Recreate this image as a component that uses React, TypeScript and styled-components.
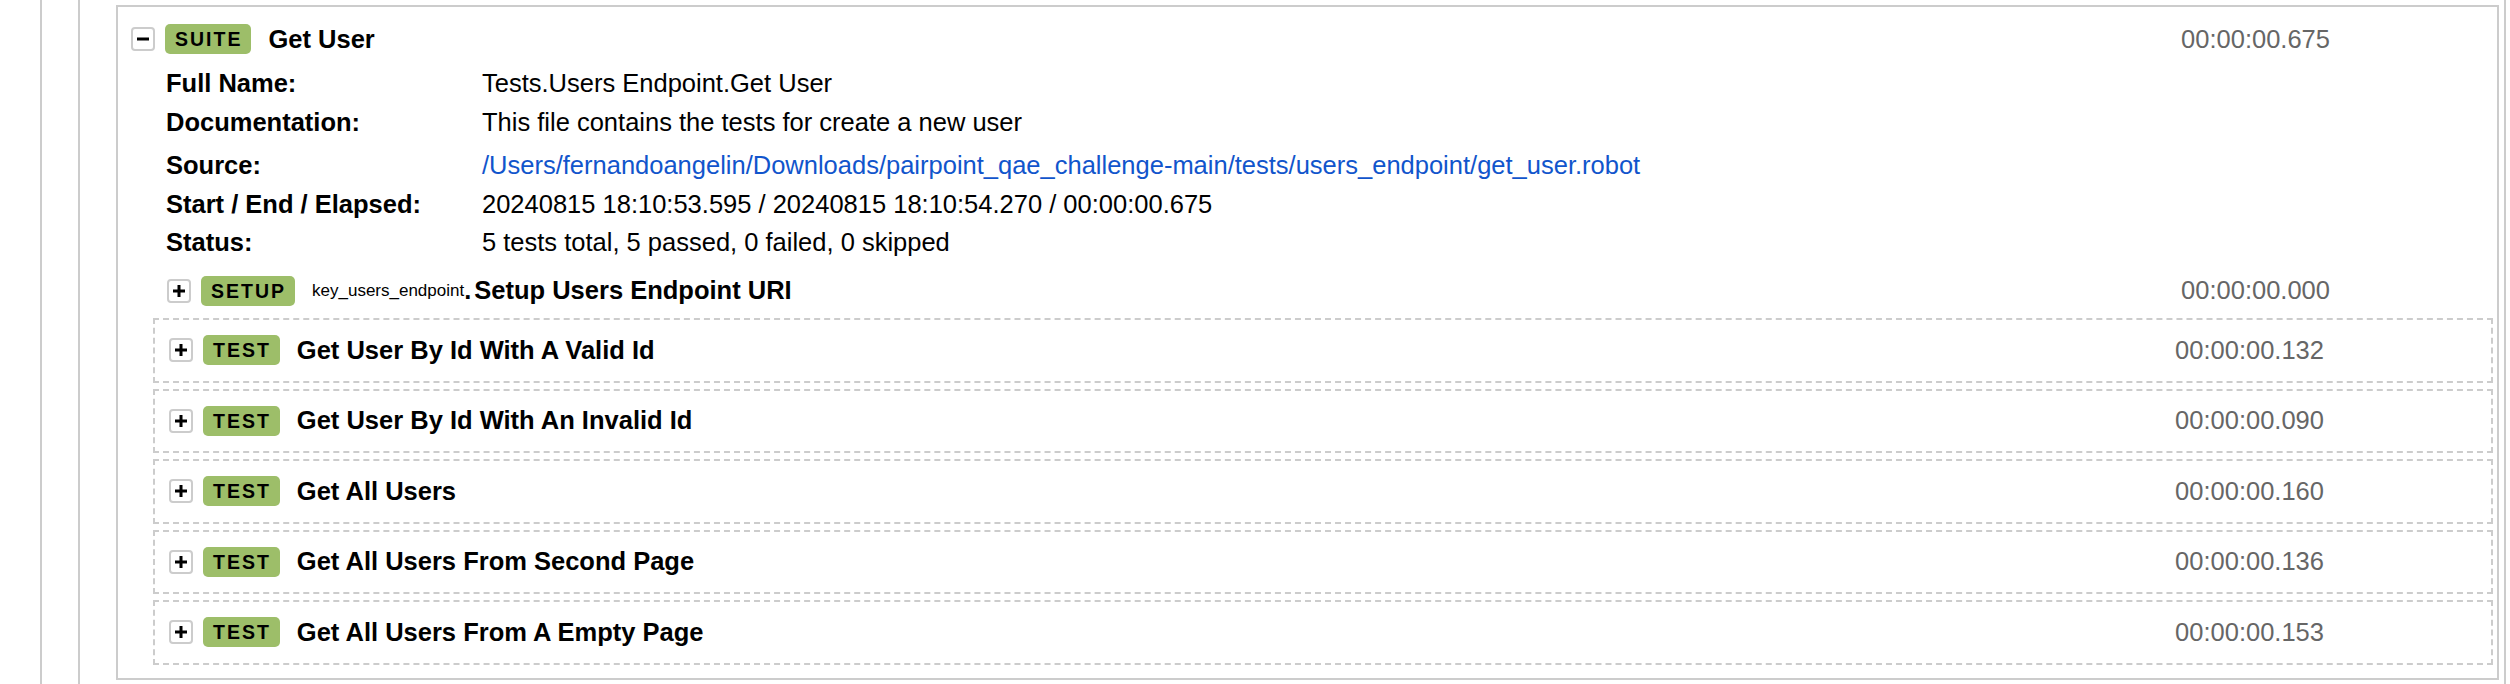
import React from "react";
import styled, { createGlobalStyle } from "styled-components";

const GlobalStyle = createGlobalStyle`
  html, body {
    margin: 0;
    padding: 0;
    background: #fff;
    overflow: hidden;
  }
  body {
    font-family: "Liberation Sans", Arial, Helvetica, sans-serif;
    font-size: 25.5px;
    color: #000;
  }
`;

const OuterFrame = styled.div`
  margin-left: 40px;
  border-left: 2px solid #ccc;
  height: 100vh;
  overflow: hidden;
`;

const ParentFrame = styled.div`
  margin: 0 4px 0 36px;
  padding: 5px 0 40px;
  border-left: 2px solid #ccc;
  border-right: 2px solid #ccc;
`;

const SuiteBox = styled.div`
  margin: 0 5px 0 36px;
  border: 2px solid #ccc;
  padding: 17px 0 13px;
`;

const Header = styled.div<{ $pad: number }>`
  display: flex;
  align-items: center;
  height: 30px;
  padding: 0 167px 0 ${(p) => p.$pad}px;
  white-space: nowrap;
`;

const Toggle = styled.span`
  box-sizing: border-box;
  flex: none;
  width: 24px;
  height: 24px;
  border: 2px solid #ccc;
  border-radius: 4px;
  display: flex;
  align-items: center;
  justify-content: center;
  margin-right: 10px;
  background: #fff;
`;

const Badge = styled.span`
  box-sizing: border-box;
  flex: none;
  height: 30px;
  padding: 4px 9px 4px 10px;
  font-size: 19.5px;
  line-height: 22px;
  font-weight: bold;
  letter-spacing: 2px;
  background: #9dbe69;
  border-radius: 5px;
  margin-right: 17px;
`;

const Name = styled.span`
  font-weight: bold;
`;

const ParentName = styled.span`
  font-size: 17px;
  font-weight: normal;
`;

const Dot = styled.span`
  font-weight: bold;
  margin-right: 3px;
`;

const Elapsed = styled.span`
  margin-left: auto;
  color: #666;
`;

const Meta = styled.div`
  display: grid;
  grid-template-columns: 316px 1fr;
  margin: 10px 0 0 48px;
  line-height: 38.5px;
`;

const MetaLabel = styled.div`
  font-weight: bold;
  white-space: nowrap;
`;

const MetaValue = styled.div<{ $extra?: boolean }>`
  white-space: nowrap;
  padding-bottom: ${(p) => (p.$extra ? 5 : 0)}px;
`;

const Link = styled.a`
  color: #15c;
  text-decoration: none;
`;

const SetupRow = styled(Header)`
  margin-top: 14px;
`;

const Children = styled.div`
  margin: 12.5px 4px 0 35px;
  display: flex;
  flex-direction: column;
  gap: 6px;
`;

const TestBox = styled.div`
  box-sizing: border-box;
  height: 64.5px;
  border: 2px dashed #ccc;
  display: flex;
  align-items: center;
`;

const TestHeader = styled(Header)`
  flex: 1;
`;

const ToggleIcon = ({ open }: { open: boolean }) => (
  <svg width="12" height="12" viewBox="0 0 12 12" aria-hidden="true">
    <rect x="0" y="4.5" width="12" height="3" fill="#000" />
    {!open && <rect x="4.5" y="0" width="3" height="12" fill="#000" />}
  </svg>
);

const tests = [
  { name: "Get User By Id With A Valid Id", time: "00:00:00.132" },
  { name: "Get User By Id With An Invalid Id", time: "00:00:00.090" },
  { name: "Get All Users", time: "00:00:00.160" },
  { name: "Get All Users From Second Page", time: "00:00:00.136" },
  { name: "Get All Users From A Empty Page", time: "00:00:00.153" },
];

export default function App() {
  return (
    <>
      <GlobalStyle />
      <OuterFrame>
        <ParentFrame>
          <SuiteBox>
            <Header $pad={13}>
              <Toggle>
                <ToggleIcon open />
              </Toggle>
              <Badge>SUITE</Badge>
              <Name>Get User</Name>
              <Elapsed>00:00:00.675</Elapsed>
            </Header>
            <Meta>
              <MetaLabel>Full Name:</MetaLabel>
              <MetaValue>Tests.Users Endpoint.Get User</MetaValue>
              <MetaLabel>Documentation:</MetaLabel>
              <MetaValue $extra>This file contains the tests for create a new user</MetaValue>
              <MetaLabel>Source:</MetaLabel>
              <MetaValue>
                <Link href="#">
                  /Users/fernandoangelin/Downloads/pairpoint_qae_challenge-main/tests/users_endpoint/get_user.robot
                </Link>
              </MetaValue>
              <MetaLabel>Start / End / Elapsed:</MetaLabel>
              <MetaValue>20240815 18:10:53.595 / 20240815 18:10:54.270 / 00:00:00.675</MetaValue>
              <MetaLabel>Status:</MetaLabel>
              <MetaValue>5 tests total, 5 passed, 0 failed, 0 skipped</MetaValue>
            </Meta>
            <SetupRow $pad={49}>
              <Toggle>
                <ToggleIcon open={false} />
              </Toggle>
              <Badge>SETUP</Badge>
              <ParentName>key_users_endpoint</ParentName>
              <Dot>.</Dot>
              <Name>Setup Users Endpoint URI</Name>
              <Elapsed>00:00:00.000</Elapsed>
            </SetupRow>
            <Children>
              {tests.map((t) => (
                <TestBox key={t.name}>
                  <TestHeader $pad={14}>
                    <Toggle>
                      <ToggleIcon open={false} />
                    </Toggle>
                    <Badge>TEST</Badge>
                    <Name>{t.name}</Name>
                    <Elapsed>{t.time}</Elapsed>
                  </TestHeader>
                </TestBox>
              ))}
            </Children>
          </SuiteBox>
        </ParentFrame>
      </OuterFrame>
    </>
  );
}
